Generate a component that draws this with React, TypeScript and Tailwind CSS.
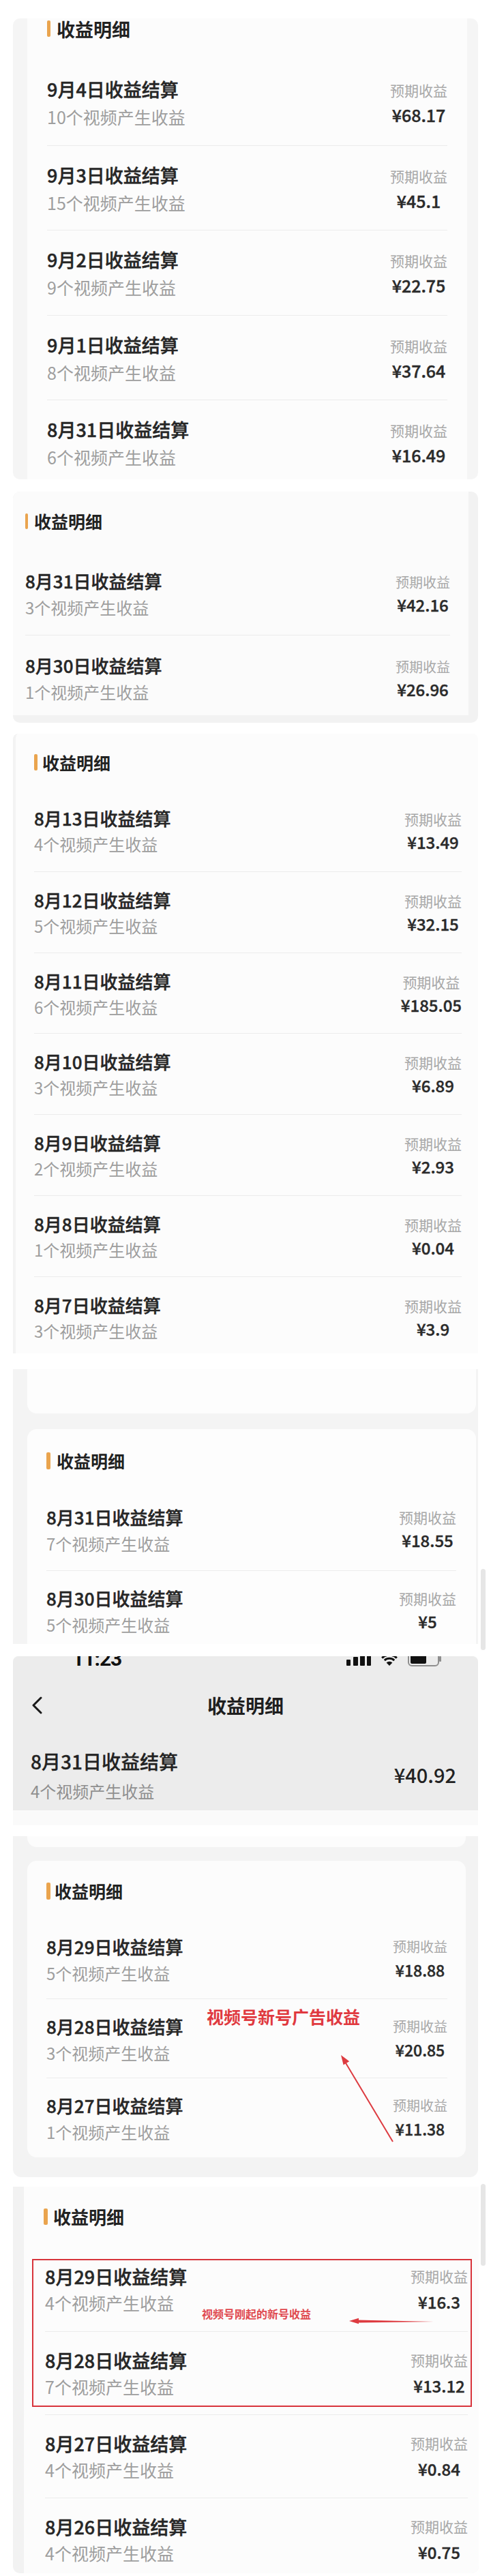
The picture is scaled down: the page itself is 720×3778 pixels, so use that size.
import React from "react";

type RowData = { t: string; s: string; a: string };

type Cfg = {
  rowH: string;
  leftPt: string;
  titleCls: string;
  subCls: string;
  rightPt: string;
  labelCls: string;
  amountCls: string;
};

function Row({ d, c, first }: { d: RowData; c: Cfg; first: boolean }) {
  return (
    <div
      className={`flex justify-between ${c.rowH} ${
        first ? "" : "border-t border-[#ececec]"
      }`}
    >
      <div className={`flex flex-col ${c.leftPt}`}>
        <div className={`${c.titleCls} font-medium text-[#262626] [-webkit-text-stroke:0.45px_#262626] whitespace-nowrap`}>{d.t}</div>
        <div className={`${c.subCls} text-[#9e9e9e] whitespace-nowrap`}>{d.s}</div>
      </div>
      <div className={`flex flex-col items-center ${c.rightPt}`}>
        <div className={`${c.labelCls} text-[#a8a8a8] whitespace-nowrap`}>预期收益</div>
        <div className={`${c.amountCls} font-medium text-[#2a2a2a] [-webkit-text-stroke:0.4px_#2a2a2a] whitespace-nowrap`}>{d.a}</div>
      </div>
    </div>
  );
}

function Header({ barCls, textCls, gapCls }: { barCls: string; textCls: string; gapCls: string }) {
  return (
    <div className={`flex items-center h-[30px] ${gapCls}`}>
      <div className={`${barCls} rounded-[2px] bg-[#eaa44e]`} />
      <div className={`${textCls} font-bold text-[#222] leading-none whitespace-nowrap`}>收益明细</div>
    </div>
  );
}

const s1: RowData[] = [
  { t: "9月4日收益结算", s: "10个视频产生收益", a: "¥68.17" },
  { t: "9月3日收益结算", s: "15个视频产生收益", a: "¥45.1" },
  { t: "9月2日收益结算", s: "9个视频产生收益", a: "¥22.75" },
  { t: "9月1日收益结算", s: "8个视频产生收益", a: "¥37.64" },
  { t: "8月31日收益结算", s: "6个视频产生收益", a: "¥16.49" },
];
const s2: RowData[] = [
  { t: "8月31日收益结算", s: "3个视频产生收益", a: "¥42.16" },
  { t: "8月30日收益结算", s: "1个视频产生收益", a: "¥26.96" },
];
const s3: RowData[] = [
  { t: "8月13日收益结算", s: "4个视频产生收益", a: "¥13.49" },
  { t: "8月12日收益结算", s: "5个视频产生收益", a: "¥32.15" },
  { t: "8月11日收益结算", s: "6个视频产生收益", a: "¥185.05" },
  { t: "8月10日收益结算", s: "3个视频产生收益", a: "¥6.89" },
  { t: "8月9日收益结算", s: "2个视频产生收益", a: "¥2.93" },
  { t: "8月8日收益结算", s: "1个视频产生收益", a: "¥0.04" },
  { t: "8月7日收益结算", s: "3个视频产生收益", a: "¥3.9" },
];
const s4: RowData[] = [
  { t: "8月31日收益结算", s: "7个视频产生收益", a: "¥18.55" },
  { t: "8月30日收益结算", s: "5个视频产生收益", a: "¥5" },
];
const s6: RowData[] = [
  { t: "8月29日收益结算", s: "5个视频产生收益", a: "¥18.88" },
  { t: "8月28日收益结算", s: "3个视频产生收益", a: "¥20.85" },
  { t: "8月27日收益结算", s: "1个视频产生收益", a: "¥11.38" },
];
const s7: RowData[] = [
  { t: "8月29日收益结算", s: "4个视频产生收益", a: "¥16.3" },
  { t: "8月28日收益结算", s: "7个视频产生收益", a: "¥13.12" },
  { t: "8月27日收益结算", s: "4个视频产生收益", a: "¥0.84" },
  { t: "8月26日收益结算", s: "4个视频产生收益", a: "¥0.75" },
];

const c1: Cfg = {
  rowH: "h-[124.5px]",
  leftPt: "pt-[23px]",
  titleCls: "text-[27px] leading-[40px]",
  subCls: "text-[25px] leading-[40px]",
  rightPt: "pt-[26px]",
  labelCls: "text-[21px] leading-[36px]",
  amountCls: "text-[25px] leading-[36px]",
};
const c2: Cfg = {
  rowH: "h-[123px]",
  leftPt: "pt-[23.5px]",
  titleCls: "text-[26px] leading-[39px]",
  subCls: "text-[24px] leading-[39px]",
  rightPt: "pt-[28.5px]",
  labelCls: "text-[20px] leading-[33px]",
  amountCls: "text-[24px] leading-[33px]",
};
const c3: Cfg = {
  rowH: "h-[118.8px]",
  leftPt: "pt-[22px]",
  titleCls: "text-[26px] leading-[38px]",
  subCls: "text-[24px] leading-[38px]",
  rightPt: "pt-[25px]",
  labelCls: "text-[21px] leading-[34px]",
  amountCls: "text-[24px] leading-[34px]",
};
const c4: Cfg = {
  rowH: "h-[118px]",
  leftPt: "pt-[19.5px]",
  titleCls: "text-[26px] leading-[39px]",
  subCls: "text-[24px] leading-[39px]",
  rightPt: "pt-[23px]",
  labelCls: "text-[21px] leading-[34px]",
  amountCls: "text-[24px] leading-[34px]",
};
const c6: Cfg = {
  rowH: "h-[116px]",
  leftPt: "pt-[19.5px]",
  titleCls: "text-[26px] leading-[39px]",
  subCls: "text-[24px] leading-[39px]",
  rightPt: "pt-[23px]",
  labelCls: "text-[20px] leading-[34px]",
  amountCls: "text-[23px] leading-[34px]",
};
const c7: Cfg = {
  rowH: "h-[122px]",
  leftPt: "pt-[21.5px]",
  titleCls: "text-[27px] leading-[39px]",
  subCls: "text-[25px] leading-[39px]",
  rightPt: "pt-[22.5px]",
  labelCls: "text-[21px] leading-[37px]",
  amountCls: "text-[24px] leading-[37px]",
};

function Rows({ data, c }: { data: RowData[]; c: Cfg }) {
  return (
    <div className="flex flex-col">
      {data.map((d, i) => (
        <Row key={i} d={d} c={c} first={i === 0} />
      ))}
    </div>
  );
}

export default function App() {
  return (
    <div className="relative w-[720px] h-[3778px] overflow-hidden bg-white font-['Noto_Sans_CJK_SC','Noto_Sans',sans-serif]">
      {/* Section 1 */}
      <div className="mt-[27px] mx-[19px] h-[676px] rounded-[10px] bg-[#f5f5f5] pl-[21px] pr-[16px]">
        <div className="h-full bg-[#fcfcfc] px-[29px]">
          <Header barCls="w-[5px] h-[24px]" textCls="text-[27px]" gapCls="gap-[9px]" />
          <div className="mt-[31px]">
            <Rows data={s1} c={c1} />
          </div>
        </div>
      </div>

      {/* Section 2 */}
      <div className="relative mt-[18px] mx-[19px] h-[339px] rounded-[10px] overflow-hidden bg-[#f2f2f2] pr-[14px] pb-[11px]">
        <div className="h-full bg-[#fbfbfb] pl-[18px] pr-[27px] pt-[28px] overflow-hidden">
          <Header barCls="w-[4px] h-[23px]" textCls="text-[25px]" gapCls="gap-[9px]" />
          <div className="mt-[29px]">
            <Rows data={s2} c={c2} />
          </div>
        </div>
      </div>

      {/* Section 3 */}
      <div className="mt-[16px] mx-[19px] h-[909px] rounded-t-[8px] overflow-hidden bg-[#fcfcfc] border-l-[4px] border-[#f3f3f3] pl-[27px] pr-[24px] pt-[27px]">
        <Header barCls="w-[5px] h-[24px]" textCls="text-[25px]" gapCls="gap-[7px]" />
        <div className="mt-[26px]">
          <Rows data={s3} c={c3} />
        </div>
      </div>

      {/* Section 4 */}
      <div className="mt-[23px] mx-[19px] h-[403px] overflow-hidden bg-[#f4f4f4] pl-[21px] pr-[3px]">
        <div className="h-[65px] bg-[#fdfdfd] rounded-b-[14px]" />
        <div className="mt-[23px] h-[330px] rounded-t-[14px] bg-[#fdfdfd] pl-[28px] pr-[29px] pt-[31px]">
          <Header barCls="w-[6px] h-[25px]" textCls="text-[25px]" gapCls="gap-[9px]" />
          <div className="mt-[28px]">
            <Rows data={s4} c={c4} />
          </div>
        </div>
      </div>

      {/* Section 5: phone screenshot */}
      <div className="mt-[18px] mx-[19px] h-[226px] rounded-t-[8px] overflow-hidden bg-[#ececec]">
        <div className="h-[14px] flex items-end justify-between pl-[87px] pr-[53px]">
          <div className="-mb-[5px] text-[30px] leading-[30px] font-bold tracking-[-1px] text-[#111] font-['Roboto',sans-serif]">
            11:23
          </div>
          <div className="flex items-end gap-[14px]">
            <svg width="36" height="22" viewBox="0 0 36 22">
              <rect x="0" y="13" width="6" height="9" rx="1" fill="#111" />
              <rect x="10" y="9" width="7" height="13" rx="1" fill="#111" />
              <rect x="20" y="5" width="7" height="17" rx="1" fill="#111" />
              <rect x="30" y="1" width="6" height="21" rx="1" fill="#111" />
            </svg>
            <svg width="26" height="20" viewBox="0 0 26 20" className="mb-[-1px]">
              <path d="M13 19 L8.6 14.4 A6.4 6.4 0 0 1 17.4 14.4 Z" fill="#111" />
              <path d="M5.8 11.2 A10.4 10.4 0 0 1 20.2 11.2" stroke="#111" strokeWidth="3" fill="none" />
              <path d="M2.2 7.6 A15.4 15.4 0 0 1 23.8 7.6" stroke="#111" strokeWidth="3" fill="none" />
            </svg>
            <svg width="50" height="22" viewBox="0 0 50 22" className="mb-[-1px]">
              <rect x="1" y="1" width="44" height="20" rx="5" stroke="#8e8e8e" strokeWidth="2" fill="none" />
              <rect x="4" y="4" width="23" height="14" rx="2" fill="#111" />
              <rect x="46" y="7" width="3" height="8" rx="1" fill="#8e8e8e" />
            </svg>
          </div>
        </div>
        <div className="mt-[30px] h-[56px] grid grid-cols-[1fr_auto_1fr] items-center">
          <div className="pl-[27px] flex items-center">
            <svg width="16" height="26" viewBox="0 0 16 26">
              <path d="M14 2 L3 13 L14 24" stroke="#1a1a1a" strokeWidth="3" fill="none" strokeLinecap="round" strokeLinejoin="round" />
            </svg>
          </div>
          <div className="text-[28px] font-bold text-[#1e1e1e] leading-none">收益明细</div>
          <div />
        </div>
        <div className="flex justify-between pl-[26px] pr-[32px]">
          <div className="flex flex-col pt-[34px]">
            <div className="text-[28px] leading-[40px] font-medium text-[#222] [-webkit-text-stroke:0.3px_#222] whitespace-nowrap">8月31日收益结算</div>
            <div className="text-[24px] leading-[48px] text-[#8f8f8f] whitespace-nowrap">4个视频产生收益</div>
          </div>
          <div className="pt-[53px] text-[29px] leading-[40px] font-medium text-[#222]">¥40.92</div>
        </div>
      </div>
      <div className="mx-[19px] h-[22px] bg-[#fafafa]" />

      {/* Section 6 */}
      <div className="relative mt-[16px] mx-[19px] h-[500px] overflow-hidden rounded-b-[12px] bg-[#f3f3f3] pl-[21px] pr-[18px]">
        <div className="h-[16px] bg-[#fcfcfc] rounded-b-[14px]" />
        <div className="mt-[20px] h-[435px] rounded-[14px] bg-[#fcfcfc] pl-[28px] pr-[27px] pt-[29px]">
          <Header barCls="w-[6px] h-[25px]" textCls="text-[25px]" gapCls="gap-[6px]" />
          <div className="mt-[27px]">
            <Rows data={s6} c={c6} />
          </div>
        </div>
        <div className="absolute left-[284px] top-[249px] text-[25px] leading-[30px] font-bold text-[#e0393f] whitespace-nowrap">
          视频号新号广告收益
        </div>
        <svg className="absolute left-0 top-0" width="681" height="500" viewBox="0 0 681 500">
          <line x1="557" y1="448" x2="487" y2="331" stroke="#dd3b40" strokeWidth="2" />
          <polygon points="481,321 493.2,330.2 484.6,335.4" fill="#dd3b40" />
        </svg>
      </div>

      {/* Section 7 */}
      <div className="relative mt-[14px] ml-[19px] w-[683px] h-[567px] overflow-hidden rounded-b-[10px] bg-[#f2f2f2] pl-[16px]">
        <div className="h-full bg-[#fcfcfc] pl-[31px] pr-[16px] pt-[29px]">
          <div className="-ml-[2px]">
            <Header barCls="w-[6px] h-[24px]" textCls="text-[26px]" gapCls="gap-[8px]" />
          </div>
          <div className="mt-[31px]">
            <Rows data={s7} c={c7} />
          </div>
        </div>
        <div className="absolute left-[28px] top-[106px] w-[645px] h-[217px] border-2 border-[#d8343c]" />
        <div className="absolute left-[277px] top-[176px] text-[16px] leading-[20px] font-bold text-[#e04a50] whitespace-nowrap">
          视频号刚起的新号收益
        </div>
        <svg className="absolute left-0 top-0" width="683" height="567" viewBox="0 0 683 567">
          <polygon points="505,195.6 617,198 505,199.4" fill="#dd3b40" />
          <polygon points="493,197 507,192.8 507,201.2" fill="#dd3b40" />
        </svg>
      </div>

      {/* scrollbars */}
      <div className="absolute left-[705px] top-[2301px] w-[7px] h-[119px] rounded-full bg-[#e6e6e6]" />
      <div className="absolute left-[705px] top-[3203px] w-[7px] h-[120px] rounded-full bg-[#e6e6e6]" />
    </div>
  );
}
